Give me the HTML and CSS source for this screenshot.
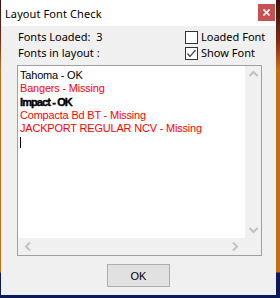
FILE: index.html
```html
<!DOCTYPE html>
<html lang="en">
<head>
    <meta charset="UTF-8">
    <title>Layout Font Check</title>
    <link rel="stylesheet" href="styles.css">
</head>
<body>
    <div class="desktop">
        <div class="window">
            <div class="titlebar">
                <span class="title">Layout Font Check</span>
                <div class="close">
                    <svg width="7" height="7" viewBox="0 0 7 7"><path d="M0.5 0.5 L6.5 6.5 M6.5 0.5 L0.5 6.5" stroke="#fff" stroke-width="1.6"/></svg>
                </div>
            </div>
            <div class="dialog">
                <div class="top">
                    <div class="labels">
                        <div class="row">Fonts Loaded:&nbsp; 3</div>
                        <div class="row">Fonts in layout :</div>
                    </div>
                    <div class="checks">
                        <label class="row check"><span class="box"></span>Loaded Font</label>
                        <label class="row check"><span class="box"><svg width="11" height="11" viewBox="0 0 11 11"><path d="M1.5 5.5 L4 8.5 L9.5 2" fill="none" stroke="#4a4a4a" stroke-width="1.3"/></svg></span>Show Font</label>
                    </div>
                </div>
                <div class="listbox">
                    <div class="list-text">
                        <div class="line">Tahoma - OK</div>
                        <div class="line missing">Bangers - Missing</div>
                        <div class="line impact">Impact - OK</div>
                        <div class="line missing">Compacta Bd BT - Missing</div>
                        <div class="line missing">JACKPORT REGULAR NCV - Missing</div>
                        <div class="caret"></div>
                    </div>
                    <div class="vscroll">
                        <svg width="17" height="17" viewBox="0 0 17 17"><path d="M4.5 10 L8.5 6 L12.5 10" fill="none" stroke="#c2c2c2" stroke-width="2"/></svg>
                        <svg width="17" height="17" viewBox="0 0 17 17"><path d="M4.5 7 L8.5 11 L12.5 7" fill="none" stroke="#c2c2c2" stroke-width="2"/></svg>
                    </div>
                    <div class="hscroll">
                        <svg width="17" height="17" viewBox="0 0 17 17"><path d="M10 4.5 L6 8.5 L10 12.5" fill="none" stroke="#c2c2c2" stroke-width="2"/></svg>
                        <svg width="17" height="17" viewBox="0 0 17 17"><path d="M7 4.5 L11 8.5 L7 12.5" fill="none" stroke="#c2c2c2" stroke-width="2"/></svg>
                    </div>
                    <div class="corner"></div>
                </div>
                <div class="actions">
                    <button class="ok">OK</button>
                </div>
            </div>
        </div>
    </div>
</body>
</html>
```

FILE: styles.css
```css
body {
    margin: 0;
    padding: 0;
    width: 280px;
    height: 298px;
    overflow: hidden;
    background: linear-gradient(to bottom, #3c0f0b 0, #7a2a12 40px, #c46f1c 70px, #c46f1c 272px, #0c1a5c 273px);
    font-family: "Noto Sans", "Open Sans", sans-serif;
}
.desktop {
    padding: 0 4px 3px 1px;
}
.window {
    width: 275px;
    height: 295px;
    background: #f0f0f0;
    display: flex;
    flex-direction: column;
}
.titlebar {
    height: 26px;
    background: #fff;
    display: flex;
    align-items: center;
    justify-content: space-between;
    padding-left: 4px;
}
.title {
    font-size: 11px;
    color: #000;
    margin-top: 1px;
    letter-spacing: 0.1px;
}
.close {
    width: 17px;
    height: 17px;
    background: #c75050;
    display: flex;
    align-items: center;
    justify-content: center;
    margin-right: 1px;
    margin-bottom: 1px;
}
.dialog {
    flex-grow: 1;
    padding: 3px 14px 0 16px;
    display: flex;
    flex-direction: column;
}
.top {
    display: grid;
    grid-template-columns: 168px 1fr;
    font-size: 11px;
    color: #000;
    white-space: nowrap;
}
.row {
    height: 16px;
    line-height: 16px;
}
.labels .row {
    padding-left: 1px;
}
.check {
    display: flex;
    align-items: center;
    gap: 3px;
}
.box {
    width: 11px;
    height: 11px;
    flex-shrink: 0;
    border: 1px solid #333;
    background: #fff;
    display: flex;
}
.listbox {
    margin-top: 4px;
    width: 245px;
    height: 191px;
    box-sizing: border-box;
    border: 1px solid #a0a0a0;
    display: grid;
    grid-template-columns: 1fr 16px;
    grid-template-rows: 1fr 17px;
}
.list-text {
    background: #fff;
    padding: 3px 2px 0;
    font-family: "Liberation Sans", Arial, sans-serif;
    font-size: 11px;
    letter-spacing: -0.2px;
    overflow: hidden;
    white-space: nowrap;
}
.line {
    height: 13.3px;
    line-height: 13px;
    color: #000;
}
.missing {
    color: #ff0000;
}
.impact {
    font-weight: bold;
    letter-spacing: -0.9px;
    -webkit-text-stroke: 0.4px #000;
}
.caret {
    width: 1px;
    height: 11px;
    background: #000;
    margin-top: 2px;
}
.vscroll {
    background: #f0f0f0;
    display: flex;
    flex-direction: column;
    justify-content: space-between;
    align-items: center;
}
.hscroll {
    background: #f0f0f0;
    display: flex;
    justify-content: space-between;
    padding: 0 2px;
}
.corner {
    background: #f0f0f0;
}
.actions {
    display: flex;
    justify-content: center;
    padding-top: 8px;
    padding-right: 2px;
}
.ok {
    width: 63px;
    height: 23px;
    background: #e1e1e1;
    border: 1px solid #adadad;
    font-family: "Liberation Sans", Arial, sans-serif;
    font-size: 11px;
    color: #000;
    padding: 0;
}
```
